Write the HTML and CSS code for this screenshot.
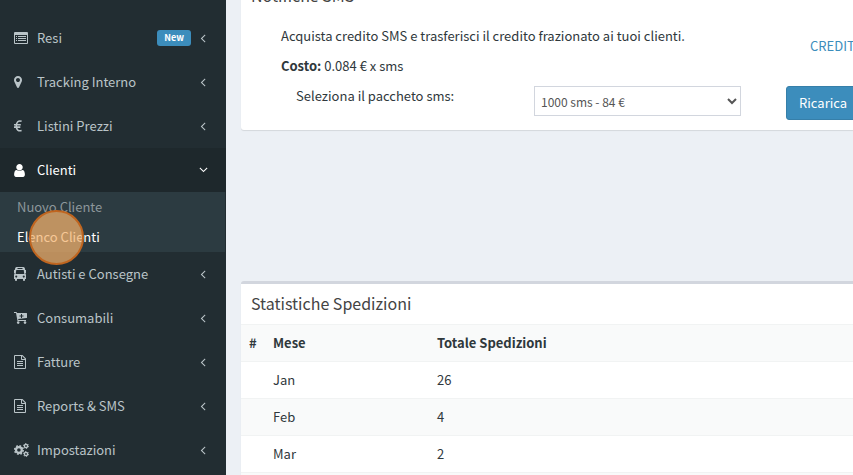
FILE: index.html
```html
<!DOCTYPE html>
<html lang="it">
<head>
<meta charset="UTF-8">
<title>Clienti</title>
<meta name="viewport" content="width=device-width, initial-scale=1.0">
<link rel="stylesheet" href="styles.css">
</head>
<body>

<svg class="sprite" aria-hidden="true">
  <symbol id="angle-left" viewBox="0 0 640 1792">
    <path d="M627 544q0 13-10 23l-393 393 393 393q10 10 10 23t-10 23l-50 50q-10 10-23 10t-23-10l-466-466q-10-10-10-23t10-23l466-466q10-10 23-10t23 10l50 50q10 10 10 23z"/>
  </symbol>
  <symbol id="file-text" viewBox="0 0 12 14">
    <path fill-rule="evenodd" d="M1 0h7.500l3.500 3.500V13q0 1-1 1H1q-1 0-1-1V1q0-1 1-1zM1 1v12h10V5H7.800q-.8 0-.8-.8V1zM8 1.100V4h2.900zM3 6h6v1H3zM3 8h6v1H3zM3 10h6v1H3z"/>
  </symbol>
</svg>

<div class="wrapper">
  <nav class="sidebar">
    <ul class="menu">
      <li>
        <a href="#">
          <svg class="icon" width="14" height="12" viewBox="0 0 14 12"><path fill-rule="evenodd" d="M1 0h12q1 0 1 1v10q0 1-1 1H1q-1 0-1-1V1q0-1 1-1zM1 3v8h12V3zM2 4h1v1H2zM4 4h8v1H4zM2 6h1v1H2zM4 6h8v1H4zM2 8h1v1H2zM4 8h8v1H4z"/></svg>
          <span>Resi</span>
          <small class="label">New</small>
          <svg class="angle"><use href="#angle-left"/></svg>
        </a>
      </li>
      <li>
        <a href="#">
          <svg class="icon" width="8" height="14" viewBox="0 0 1024 1792"><path d="M768 640q0-106-75-181t-181-75-181 75-75 181 75 181 181 75 181-75 75-181zm256 0q0 109-33 179l-364 774q-16 33-47.500 52t-67.500 19-67.500-19-46.500-52l-365-774q-33-70-33-179 0-212 150-362t362-150 362 150 150 362z"/></svg>
          <span>Tracking Interno</span>
          <svg class="angle"><use href="#angle-left"/></svg>
        </a>
      </li>
      <li>
        <a href="#">
          <svg class="icon stroke" width="8" height="12" viewBox="0 0 8 12"><path d="M7.600 1.300C4.500.2 2.300 2 2.300 6s2.200 5.500 5.300 4.500M0 4.800h6.800M0 7.100h6.300"/></svg>
          <span>Listini Prezzi</span>
          <svg class="angle"><use href="#angle-left"/></svg>
        </a>
      </li>
      <li class="active">
        <a href="#">
          <svg class="icon" width="11" height="14" viewBox="0 0 1280 1664"><path d="M1280 1399q0 109-62.500 187t-150.500 78h-854q-88 0-150.500-78t-62.500-187q0-85 8.500-160.500t31.500-152 58.500-131 94-89 134.500-34.500q131 128 313 128t313-128q76 0 134.500 34.500t94 89 58.500 131 31.500 152 8.500 160.500zm-256-887q0 159-112.500 271.500t-271.500 112.500-271.500-112.500-112.500-271.500 112.500-271.500 271.500-112.500 271.500 112.500 112.500 271.500z"/></svg>
          <span>Clienti</span>
          <svg class="angle"><use href="#angle-left"/></svg>
        </a>
        <ul class="submenu">
          <li><a href="#">Nuovo Cliente</a></li>
          <li class="current"><a href="#">Elenco Clienti</a><span class="pointer"></span></li>
        </ul>
      </li>
      <li>
        <a href="#">
          <svg class="icon" width="12" height="14" viewBox="0 0 12 14"><path fill-rule="evenodd" d="M2.500 0h7q1.200 0 1.400 1.500L11.200 3h.8v3h-.6L12 8v4h-1v1.200q0 .8-1 .8t-1-.8V12H3v1.200q0 .8-1 .8t-1-.8V12H0V8l.6-2H0V3h.8l.3-1.500Q1.300 0 2.500 0zM3.500 1v1h5V1zM2.300 3l-.6 4h8.600l-.6-4zM2.200 8.500a1 1 0 1 0 .1 0zM9.700 8.500a1 1 0 1 0 .1 0z"/></svg>
          <span>Autisti e Consegne</span>
          <svg class="angle"><use href="#angle-left"/></svg>
        </a>
      </li>
      <li>
        <a href="#">
          <svg class="icon" width="13" height="12" viewBox="0 0 13 12"><path fill-rule="evenodd" d="M0 0h2.300q.5 0 .7 1h9.500q.5 0 .5.500v4q0 .5-.5.600L4.200 7l.2 1H12v1H3.500L2 1H0zM7 2v1.500H5.500v1H7V6h1V4.500h1.500v-1H8V2z"/><circle cx="4.200" cy="10.600" r="1.300"/><circle cx="11" cy="10.600" r="1.300"/></svg>
          <span>Consumabili</span>
          <svg class="angle"><use href="#angle-left"/></svg>
        </a>
      </li>
      <li>
        <a href="#">
          <svg class="icon" width="12" height="14"><use href="#file-text"/></svg>
          <span>Fatture</span>
          <svg class="angle"><use href="#angle-left"/></svg>
        </a>
      </li>
      <li>
        <a href="#">
          <svg class="icon" width="12" height="14"><use href="#file-text"/></svg>
          <span>Reports &amp; SMS</span>
          <svg class="angle"><use href="#angle-left"/></svg>
        </a>
      </li>
      <li>
        <a href="#">
          <svg class="icon cogs" width="15" height="14" viewBox="0 0 15 14">
            <circle cx="4.900" cy="7" r="2.900" stroke-width="2.200"/>
            <circle cx="4.900" cy="7" r="4.200" stroke-width="1.700" stroke-dasharray="1.700 1.599"/>
            <circle cx="12" cy="3" r="1.600" stroke-width="1.400"/>
            <circle cx="12" cy="3" r="2.500" stroke-width="1" stroke-dasharray="1.300 1.318"/>
            <circle cx="12" cy="11" r="1.600" stroke-width="1.400"/>
            <circle cx="12" cy="11" r="2.500" stroke-width="1" stroke-dasharray="1.300 1.318"/>
          </svg>
          <span>Impostazioni</span>
          <svg class="angle"><use href="#angle-left"/></svg>
        </a>
      </li>
    </ul>
  </nav>

  <main class="content">
    <section class="box sms-box">
      <h3 class="box-title">Notifiche SMS</h3>
      <div class="sms-body">
        <div class="sms-text">
          <p>Acquista credito SMS e trasferisci il credito frazionato ai tuoi clienti.</p>
          <p><b>Costo:</b> 0.084 € x sms</p>
        </div>
        <a class="credit" href="#">CREDIT</a>
        <label for="pacchetto">Seleziona il paccheto sms:</label>
        <select id="pacchetto">
          <option>1000 sms - 84 €</option>
        </select>
        <button type="button" class="button">Ricarica</button>
      </div>
    </section>

    <section class="box stats-box">
      <h3 class="box-title">Statistiche Spedizioni</h3>
      <table>
        <thead>
          <tr><th class="num">#</th><th class="month">Mese</th><th>Totale Spedizioni</th></tr>
        </thead>
        <tbody>
          <tr><td></td><td>Jan</td><td>26</td></tr>
          <tr><td></td><td>Feb</td><td>4</td></tr>
          <tr><td></td><td>Mar</td><td>2</td></tr>
          <tr><td></td><td></td><td></td></tr>
        </tbody>
      </table>
    </section>
  </main>
</div>

</body>
</html>
```
FILE: styles.css
```css
* {
  box-sizing: border-box;
}

body {
  margin: 0;
  font-family: "Noto Sans CJK SC", "Open Sans", sans-serif;
  font-size: 13px;
  line-height: 20px;
  color: #2f383c;
  background-color: #ecf0f5;
}

a {
  color: #3c8dbc;
  text-decoration: none;
}

ul {
  list-style: none;
  margin: 0;
  padding: 0;
}

.sprite {
  display: none;
}

.wrapper {
  display: flex;
  height: 100vh;
  overflow: hidden;
}

/* sidebar */
.sidebar {
  flex: 0 0 226px;
  padding-top: 16px;
  background-color: #222d32;
}

.menu > li > a {
  display: flex;
  align-items: center;
  height: 44px;
  padding: 0 17px 0 14px;
  color: #bac4c8;
}

.menu > li.active > a {
  color: #fff;
  background-color: #1e282c;
}

.menu span {
  flex: 1;
}

.icon {
  flex: none;
  fill: currentColor;
}

.icon + span {
  margin-left: 9px;
}

.icon[width="8"] + span {
  margin-left: 15px;
}

.icon[width="11"] + span {
  margin-left: 12px;
}

.icon[width="12"] + span {
  margin-left: 11px;
}

.icon[width="13"] + span {
  margin-left: 10px;
}

.icon[width="15"] + span {
  margin-left: 8px;
}

.stroke {
  fill: none;
  stroke: currentColor;
  stroke-width: 1.6;
}

.cogs {
  fill: none;
  stroke: currentColor;
}

.angle {
  width: 12px;
  height: 14px;
  fill: currentColor;
}

.active .angle {
  transform: rotate(-90deg);
}

.label {
  margin-right: 6px;
  padding: 0 7px;
  border-radius: 3px;
  font-size: 9px;
  line-height: 16px;
  font-weight: bold;
  color: #fff;
  background-color: #3c8dbc;
}

.submenu {
  margin-right: 1px;
  background-color: #2c3b41;
}

.submenu li {
  position: relative;
}

.submenu a {
  display: block;
  padding: 5px 17px;
  color: #8d979b;
}

.submenu .current a {
  color: #fff;
}

/* click marker over the current entry */
.pointer {
  position: absolute;
  top: -12px;
  left: 29px;
  width: 55px;
  height: 55px;
  border: 2px solid #c0651f;
  border-radius: 50%;
  background-color: rgba(244, 178, 110, 0.73);
}

/* content */
.content {
  flex: 1;
  min-width: 0;
  padding-left: 15px;
  overflow: hidden;
}

.box {
  background-color: #fff;
  border-top: 3px solid #d2d6de;
  border-radius: 3px 0 0 3px;
  box-shadow: 0 1px 1px rgba(0, 0, 0, 0.1);
}

.box-title {
  margin: 0;
  padding: 9px 10px 11px;
  font-size: 16px;
  line-height: 20px;
  font-weight: normal;
  color: #444;
}

/* scrolled partly out of view */
.sms-box {
  margin-top: -27px;
  margin-bottom: 151px;
}

.sms-body {
  display: grid;
  grid-template-columns: 239px 238px 238px;
  column-gap: 14px;
  padding: 10px 0 10px 40px;
}

.sms-text {
  grid-column: 1 / 3;
}

.sms-text p {
  margin: 0 0 10px;
}

.credit {
  padding: 10px 24px;
}

.sms-body label {
  padding-left: 15px;
}

.sms-body select {
  width: 207px;
  height: 30px;
  padding: 0 2px;
  border: 1px solid #d2d6de;
  background-color: #fff;
  font: inherit;
  font-size: 12px;
  color: #555;
}

.button {
  justify-self: start;
  padding: 6px 12px;
  border: 1px solid #367fa9;
  border-radius: 3px;
  font: inherit;
  color: #fff;
  background-color: #3c8dbc;
}

table {
  width: 100%;
  border-spacing: 0;
}

th, td {
  height: 37px;
  padding: 8px;
  border-top: 1px solid #f1f3f3;
  text-align: left;
}

tr {
  background-color: #fff;
}

thead tr, tbody tr:nth-child(even) {
  background-color: #f9fafa;
}

.num {
  width: 24px;
}

.month {
  width: 164px;
}
```
